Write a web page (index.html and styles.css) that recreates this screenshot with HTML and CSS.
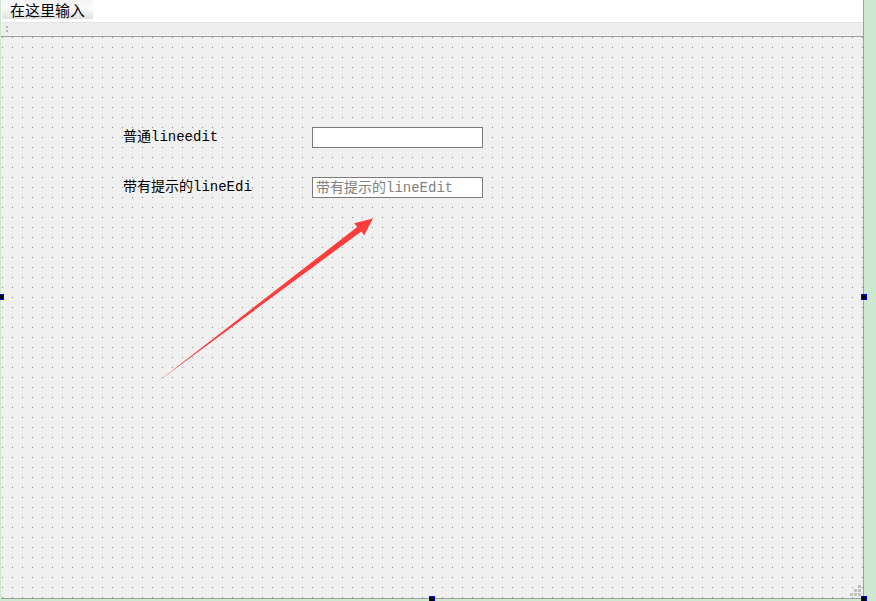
FILE: index.html
```html
<!DOCTYPE html>
<html lang="zh-CN">
<head>
<meta charset="utf-8">
<title>Form Designer</title>
<link rel="stylesheet" href="styles.css">
</head>
<body>
<div class="screen">
  <div class="canvas">
    <div class="menubar">
      <div class="menu-item">在这里输入</div>
    </div>
    <div class="toolbar">
      <span class="grip-handle"></span>
    </div>
    <div class="form">
      <div class="fields">
        <label class="field-label">普通lineedit</label>
        <input class="line-edit" type="text">
        <label class="field-label">带有提示的lineEdi</label>
        <input class="line-edit" type="text" placeholder="带有提示的lineEdit">
      </div>
      <svg class="arrow" width="876" height="601" viewBox="0 0 876 601">
        <polygon points="158,381.5 357.2,227 354.2,223.2 373,218.4 364.2,235.2 361.3,231.4" fill="#fd3c3c"/>
      </svg>
      <div class="size-grip">
        <span></span><span></span><span></span>
        <span></span><span></span><span></span>
      </div>
    </div>
  </div>
  <span class="handle handle-left"></span>
  <span class="handle handle-right"></span>
  <span class="handle handle-bottom"></span>
  <span class="handle handle-corner"></span>
</div>
</body>
</html>
```
FILE: styles.css
```css
* { box-sizing: border-box; }

html, body {
  margin: 0;
  padding: 0;
}

body {
  width: 876px;
  height: 601px;
  overflow: hidden;
  background: #cce8cf;
  font-family: "Noto Sans CJK SC", sans-serif;
}

.screen {
  position: relative;
  width: 876px;
  height: 601px;
  display: flex;
}

.canvas {
  margin-left: 1px;
  width: 863px;
  height: 599px;
  border-right: 1px solid #a0a0a0;
  display: flex;
  flex-direction: column;
}

/* menu bar */
.menubar {
  height: 23px;
  background: #ffffff;
  border-bottom: 1px solid #e4e4e4;
  padding-left: 1px;
}

.menu-item {
  width: 91px;
  height: 19px;
  padding-left: 8px;
  background: linear-gradient(#f4f4f4, #fafafa 45%, #dedede);
  font-size: 15px;
  line-height: 19px;
  color: #000;
}

/* tool bar strip */
.toolbar {
  height: 14px;
  background: #eeeeee;
  border-bottom: 1px solid #a0a0a0;
  position: relative;
}

.grip-handle {
  position: absolute;
  left: 5px;
  top: 3px;
  width: 2px;
  height: 2px;
  background: #b4b4b4;
  box-shadow: 0 4px 0 #b4b4b4;
}

/* form surface with 10px dot grid */
.form {
  position: relative;
  flex: 1;
  border-bottom: 1px solid #a0a0a0;
  background-color: #f0f0f0;
  background-image: conic-gradient(at 1px 1px, transparent 75%, #8a8a8a 0);
  background-size: 10px 10px;
  background-position: 1px 0;
}

.fields {
  margin: 90px 0 0 122px;
  display: grid;
  grid-template-columns: 189px 171px;
  grid-auto-rows: 21px;
  row-gap: 29px;
  align-items: center;
}

.field-label,
.line-edit {
  font-family: "Liberation Mono", "Noto Sans CJK SC", monospace;
  font-size: 14px;
  color: #000;
}

.field-label {
  white-space: nowrap;
  line-height: 21px;
}

.line-edit {
  width: 171px;
  height: 21px;
  margin: 0;
  padding: 0 0 0 3px;
  border: 1px solid #7a7a7a;
  border-radius: 0;
  background: #ffffff;
  outline: none;
}

.line-edit::placeholder {
  color: #808080;
  opacity: 1;
}

.arrow {
  position: absolute;
  left: -1px;
  top: -37px;
  pointer-events: none;
}

.size-grip {
  position: absolute;
  right: 2px;
  bottom: 2px;
  width: 11px;
  height: 11px;
  display: grid;
  grid-template-columns: repeat(3, 3px);
  grid-template-rows: repeat(3, 3px);
  gap: 1px;
}

.size-grip span { background: #c0c0c0; }
.size-grip span:nth-child(1) { grid-area: 1 / 3; }
.size-grip span:nth-child(2) { grid-area: 2 / 2; }
.size-grip span:nth-child(3) { grid-area: 2 / 3; }
.size-grip span:nth-child(4) { grid-area: 3 / 1; }
.size-grip span:nth-child(5) { grid-area: 3 / 2; }
.size-grip span:nth-child(6) { grid-area: 3 / 3; }

/* selection handles on the form edges */
.handle {
  position: absolute;
  width: 6px;
  height: 6px;
  background: #000;
  border: 1px solid #0000ff;
}

.handle-left { left: -2px; top: 294px; }
.handle-right { left: 861px; top: 294px; }
.handle-bottom { left: 429px; top: 596px; }
.handle-corner { left: 861px; top: 596px; }
```
